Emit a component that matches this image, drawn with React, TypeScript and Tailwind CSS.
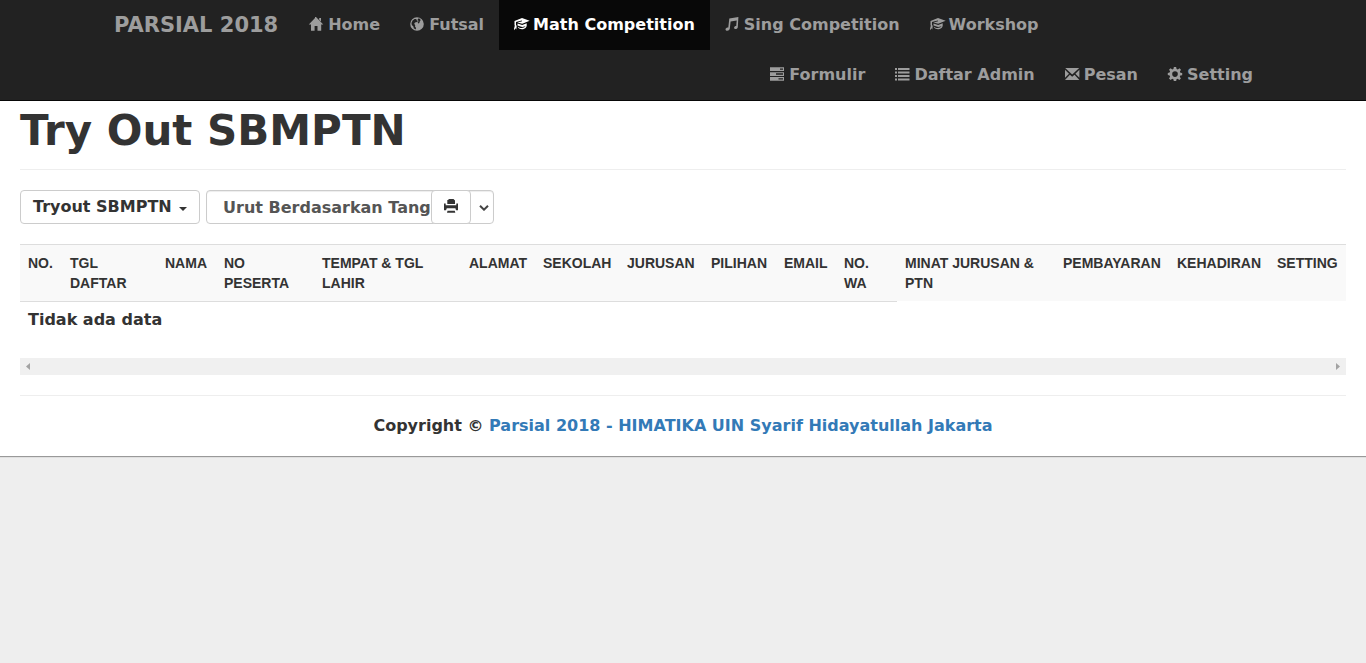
import type { ReactNode } from "react";

function Glyph({ children }: { children: ReactNode }) {
  return (
    <svg viewBox="0 0 14 14" className="mb-[2px] h-[14px] w-[14px] shrink-0 overflow-visible fill-current" aria-hidden="true">
      {children}
    </svg>
  );
}

const HomeIcon = () => (
  <Glyph>
    <path d="M7 0 14.3 7.4H12.2V13.7H8.5V9H5.6V13.7H2V7.4H-.2L6 1V0Z" />
    <path d="M10.2 1H12V4.5L10.2 3Z" />
  </Glyph>
);

const GlobeIcon = () => (
  <Glyph>
    <path
      fillRule="evenodd"
      d="M7 .2a6.8 6.8 0 1 1 0 13.6A6.8 6.8 0 0 1 7 .2ZM4.6 1.9 2.6 3.4 1.5 6 1.8 8l1.6 1.4.4 1.8 1.8 1.2.5-1.5-1.1-1.5.2-1.2L4.2 6.8 5 5.4l2-.4 1-1L6.6 3.2 6.3 2ZM8.2 1.6l-.6 1.2 1 1.2-.9 1.6.4.8 1.2-.4.4-1.6.9-1.2-.6-1.4Z"
    />
  </Glyph>
);

const CapIcon = () => (
  <Glyph>
    <path d="M8 .9 15.7 3.7 8.2 6.8 3.4 5.4 8.1 4.2 7.8 3.6 2 5V7.8L2.7 9 2.3 12.6 1.5 11.2.3 13.2 0 11.8.8 8.7.5 8V4Z" />
    <path d="M3.5 6.6 8.2 8 12.7 6.2V9L12 10.4C10 12.8 6 12.8 4 10.6L3.7 9.4C6 11.5 9.6 11.5 11.6 9.3L8.2 10.1 3.5 8.5Z" />
  </Glyph>
);

const MusicIcon = () => (
  <Glyph>
    <path
      fillRule="evenodd"
      d="M4.3 1.5 13.4 0 12.8 10.3C12.6 11.8 10.9 12.5 9.8 11.9 8.4 11 9.3 9 11.2 9L11.7 3.4 5.6 4.5 4.8 11.8C4.4 13.4 2.4 14.2 1.1 13.4-.2 12.5.8 10.6 3.3 10.6Z"
    />
  </Glyph>
);

const TasksIcon = () => (
  <Glyph>
    <path
      fillRule="evenodd"
      d="M0 .3H14V4H0ZM10 1.4V2.8H13V1.4ZM0 5.2H14V8.9H0ZM6 6.3V7.7H13V6.3ZM0 10H14V13.7H0ZM8.5 11.2V12.6H13V11.2Z"
    />
  </Glyph>
);

const ListIcon = () => (
  <Glyph>
    <path d="M0 1H2V3H0ZM3 1H14.5V3H3ZM0 4.5H2V6.5H0ZM3 4.5H14.5V6.5H3ZM0 8H2V10H0ZM3 8H14.5V10H3ZM0 11.5H2V13.5H0ZM3 11.5H14.5V13.5H3Z" />
  </Glyph>
);

const EnvelopeIcon = () => (
  <Glyph>
    <path d="M.2 1H14.2L7.2 7.6ZM0 2.8 4 6.8 0 10.8ZM14.4 2.8V10.8L10.4 6.8ZM4.9 7.7 7.2 9.8 9.5 7.7 14.4 13H0Z" />
  </Glyph>
);

const CogIcon = () => (
  <Glyph>
    <path
      fillRule="evenodd"
      d="M5.9 0H8.1L8.6 2 9.8 2.5 11.5 1.3 13 2.8 11.9 4.5 12.4 5.7 14.2 6V8.2L12.3 8.6 11.8 9.8 12.9 11.4 11.3 13 9.7 11.8 8.5 12.3 8.2 14H5.8L5.4 12.3 4.2 11.8 2.6 13 1 11.4 2.1 9.7 1.6 8.5-.2 8.1V5.9L1.6 5.5 2.1 4.3 1 2.7 2.6 1.2 4.3 2.4 5.4 1.9ZM7 4.3A2.8 2.8 0 1 0 7 9.9 2.8 2.8 0 1 0 7 4.3Z"
    />
  </Glyph>
);

const PrintIcon = () => (
  <Glyph>
    <path d="M4 1 5 0H9.5L11 1.5V5H3.3V1ZM0 4.5H1.7V6.2H12.3V4.5H14V11.3H12L11.4 9.2H2.8L2 11.3H0ZM3.5 11.8H10.8L11.3 13.7H3Z" />
  </Glyph>
);

type NavItem = { label: string; icon: ReactNode; active?: boolean };

const leftItems: NavItem[] = [
  { label: "Home", icon: <HomeIcon /> },
  { label: "Futsal", icon: <GlobeIcon /> },
  { label: "Math Competition", icon: <CapIcon />, active: true },
  { label: "Sing Competition", icon: <MusicIcon /> },
  { label: "Workshop", icon: <CapIcon /> },
];

const rightItems: NavItem[] = [
  { label: "Formulir", icon: <TasksIcon /> },
  { label: "Daftar Admin", icon: <ListIcon /> },
  { label: "Pesan", icon: <EnvelopeIcon /> },
  { label: "Setting", icon: <CogIcon /> },
];

function NavLinks({ items }: { items: NavItem[] }) {
  return (
    <ul className="flex flex-wrap">
      {items.map((item) => (
        <li key={item.label}>
          <a
            href="#"
            aria-current={item.active ? "page" : undefined}
            className={
              item.active
                ? "flex h-[50px] items-center gap-[5px] bg-[#080808] px-[15px] text-white"
                : "flex h-[50px] items-center gap-[5px] px-[15px] hover:text-white"
            }
          >
            {item.icon}
            {item.label}
          </a>
        </li>
      ))}
    </ul>
  );
}

const columns = [
  { label: "NO.", width: "w-[42px]" },
  { label: "TGL DAFTAR", width: "w-[95px]" },
  { label: "NAMA", width: "w-[59px]" },
  { label: "NO PESERTA", width: "w-[98px]" },
  { label: "TEMPAT & TGL LAHIR", width: "w-[147px]" },
  { label: "ALAMAT", width: "w-[74px]" },
  { label: "SEKOLAH", width: "w-[84px]" },
  { label: "JURUSAN", width: "w-[84px]" },
  { label: "PILIHAN", width: "w-[73px]" },
  { label: "EMAIL", width: "w-[60px]" },
  { label: "NO. WA", width: "w-[61px]" },
  { label: "MINAT JURUSAN & PTN", width: "w-[158px]" },
  { label: "PEMBAYARAN", width: "w-[114px]" },
  { label: "KEHADIRAN", width: "w-[100px]" },
  { label: "SETTING", width: "w-[77px]" },
];

export default function App() {
  return (
    <div className="min-h-screen bg-[#eee] font-['DejaVu_Sans',sans-serif] text-base leading-5 font-bold text-[#333]">
      <div className="bg-white shadow-[0_1px_1px_#999]">
        <nav className="border-b border-[#080808] bg-[#222] text-[#9d9d9d]">
          <div className="mx-auto max-w-[1170px]">
            <div className="flex flex-wrap">
              <a href="#" className="flex h-[50px] items-center pr-4 pl-4 text-[21px]">
                PARSIAL 2018
              </a>
              <NavLinks items={leftItems} />
            </div>
            <div className="flex justify-end">
              <NavLinks items={rightItems} />
            </div>
          </div>
        </nav>

        <main className="px-5">
          <h1 className="pt-[10px] text-[42px] leading-10">Try Out SBMPTN</h1>
          <hr className="mt-[18px] mb-5 border-[#eee]" />

          <div className="flex gap-[6px]">
            <button
              type="button"
              className="flex h-[34px] w-[180px] items-center justify-between rounded border border-[#ccc] bg-white px-3"
            >
              Tryout SBMPTN
              <svg viewBox="0 0 8 4" className="mt-[3px] h-1 w-2 fill-current" aria-hidden="true">
                <path d="M0 0H8L4 4Z" />
              </svg>
            </button>

            <div className="relative w-[288px]">
              <select
                aria-label="Urutan"
                className="h-[34px] w-full appearance-none rounded border border-[#ccc] bg-white pt-[2px] pr-[60px] pl-4 text-[#555] shadow-[inset_0_1px_1px_rgba(0,0,0,0.075)]"
              >
                <option>Urut Berdasarkan Tanggal Daftar</option>
                <option>Urut Berdasarkan Nama</option>
              </select>
              <svg
                viewBox="0 0 10 6"
                className="pointer-events-none absolute top-[15px] right-[5px] h-[6px] w-[10px] fill-none stroke-[#444] stroke-2"
                aria-hidden="true"
              >
                <path d="M1 .8 5 4.7 9 .8" />
              </svg>
              <button
                type="button"
                aria-label="Cetak"
                className="absolute top-0 right-[23px] flex h-[34px] w-10 items-center justify-center rounded border border-[#ccc] bg-white"
              >
                <PrintIcon />
              </button>
            </div>
          </div>

          <div className="mt-5">
            <table className="mb-5 w-full table-fixed border-separate border-spacing-0">
              <thead className="font-['Liberation_Sans',Arial,sans-serif] text-sm leading-5">
                <tr className="bg-[#f9f9f9]">
                  {columns.map((column) => (
                    <th
                      key={column.label}
                      scope="col"
                      className={`${column.width} border-t border-[#ddd] p-2 text-left align-top`}
                    >
                      {column.label}
                    </th>
                  ))}
                </tr>
              </thead>
              <tbody>
                <tr>
                  <td colSpan={11} className="border-t border-[#ddd] p-2">
                    Tidak ada data
                  </td>
                </tr>
              </tbody>
            </table>
            <div className="flex h-[17px] items-center justify-between bg-[#f0f0f0] px-[6px]" aria-hidden="true">
              <svg viewBox="0 0 4 7" className="h-[7px] w-1 fill-[#a3a3a3]">
                <path d="M4 0V7L0 3.5Z" />
              </svg>
              <svg viewBox="0 0 4 7" className="h-[7px] w-1 fill-[#a3a3a3]">
                <path d="M0 0V7L4 3.5Z" />
              </svg>
            </div>
          </div>

          <hr className="mt-5 border-[#eee]" />
        </main>

        <footer className="px-5 py-5 text-center">
          Copyright ©{" "}
          <a href="#" className="text-[#337ab7]">
            Parsial 2018 - HIMATIKA UIN Syarif Hidayatullah Jakarta
          </a>
        </footer>
      </div>
    </div>
  );
}
